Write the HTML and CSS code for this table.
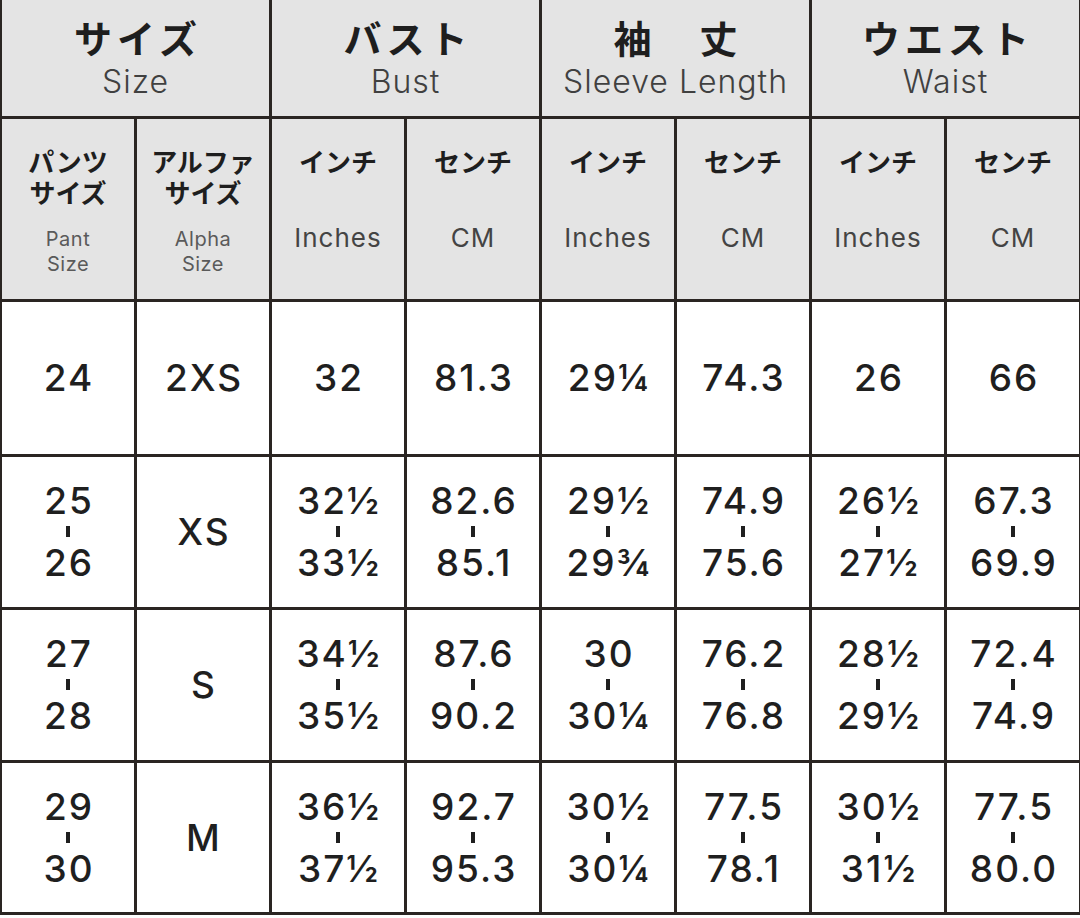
FILE: index.html
```html
<!DOCTYPE html>
<html lang="ja">
<head>
<meta charset="utf-8">
<title>サイズ表</title>
<link rel="stylesheet" href="styles.css">
</head>
<body>
<div class="chart">
  <div class="h1 span2"><div class="jp-big">サイズ</div><div class="en-big">Size</div></div>
  <div class="h1 span2"><div class="jp-big">バスト</div><div class="en-big">Bust</div></div>
  <div class="h1 span2"><div class="jp-big">袖　丈</div><div class="en-big">Sleeve Length</div></div>
  <div class="h1 span2"><div class="jp-big">ウエスト</div><div class="en-big">Waist</div></div>

  <div class="h2"><div class="jp-sm">パンツ<br>サイズ</div><div class="en-sm">Pant<br>Size</div></div>
  <div class="h2"><div class="jp-sm">アルファ<br>サイズ</div><div class="en-sm">Alpha<br>Size</div></div>
  <div class="h2"><div class="jp-sm">インチ</div><div class="en-md">Inches</div></div>
  <div class="h2"><div class="jp-sm">センチ</div><div class="en-md">CM</div></div>
  <div class="h2"><div class="jp-sm">インチ</div><div class="en-md">Inches</div></div>
  <div class="h2"><div class="jp-sm">センチ</div><div class="en-md">CM</div></div>
  <div class="h2"><div class="jp-sm">インチ</div><div class="en-md">Inches</div></div>
  <div class="h2"><div class="jp-sm">センチ</div><div class="en-md">CM</div></div>

  <div class="c"><span>24</span></div>
  <div class="c"><span>2XS</span></div>
  <div class="c"><span>32</span></div>
  <div class="c"><span>81.3</span></div>
  <div class="c"><span>29¼</span></div>
  <div class="c"><span>74.3</span></div>
  <div class="c"><span>26</span></div>
  <div class="c"><span>66</span></div>

  <div class="c"><span>25</span><i class="tick"></i><span>26</span></div>
  <div class="c"><span>XS</span></div>
  <div class="c"><span>32½</span><i class="tick"></i><span>33½</span></div>
  <div class="c"><span>82.6</span><i class="tick"></i><span>85.1</span></div>
  <div class="c"><span>29½</span><i class="tick"></i><span>29¾</span></div>
  <div class="c"><span>74.9</span><i class="tick"></i><span>75.6</span></div>
  <div class="c"><span>26½</span><i class="tick"></i><span>27½</span></div>
  <div class="c"><span>67.3</span><i class="tick"></i><span>69.9</span></div>

  <div class="c"><span>27</span><i class="tick"></i><span>28</span></div>
  <div class="c"><span>S</span></div>
  <div class="c"><span>34½</span><i class="tick"></i><span>35½</span></div>
  <div class="c"><span>87.6</span><i class="tick"></i><span>90.2</span></div>
  <div class="c"><span>30</span><i class="tick"></i><span>30¼</span></div>
  <div class="c"><span>76.2</span><i class="tick"></i><span>76.8</span></div>
  <div class="c"><span>28½</span><i class="tick"></i><span>29½</span></div>
  <div class="c"><span>72.4</span><i class="tick"></i><span>74.9</span></div>

  <div class="c"><span>29</span><i class="tick"></i><span>30</span></div>
  <div class="c"><span>M</span></div>
  <div class="c"><span>36½</span><i class="tick"></i><span>37½</span></div>
  <div class="c"><span>92.7</span><i class="tick"></i><span>95.3</span></div>
  <div class="c"><span>30½</span><i class="tick"></i><span>30¼</span></div>
  <div class="c"><span>77.5</span><i class="tick"></i><span>78.1</span></div>
  <div class="c"><span>30½</span><i class="tick"></i><span>31½</span></div>
  <div class="c"><span>77.5</span><i class="tick"></i><span>80.0</span></div>
</div>
</body>
</html>
```

FILE: styles.css
```css
html, body {
  margin: 0;
  padding: 0;
  background: #ffffff;
}

.chart {
  width: 1080px;
  box-sizing: border-box;
  padding: 0 1px 3px 2px;
  background: #2a2522;
  display: grid;
  grid-template-columns: repeat(8, 132px);
  grid-template-rows: 116px 180px 152px 150px 150px 149px;
  column-gap: 3px;
  row-gap: 3px;
  font-family: "Inter", "Liberation Sans", sans-serif;
  color: #222;
}

.span2 {
  grid-column: span 2;
}

.h1 {
  background: #e4e4e4;
  display: flex;
  flex-direction: column;
  align-items: center;
  padding-top: 16px;
  box-sizing: border-box;
}

.jp-big {
  font-family: "Noto Sans CJK JP", sans-serif;
  font-weight: 700;
  font-size: 38px;
  line-height: 42px;
  letter-spacing: 5px;
  margin-right: -5px;
  color: #1e1e1e;
}

.en-big {
  font-size: 32px;
  line-height: 36px;
  font-weight: 300;
  letter-spacing: 1px;
  color: #404040;
  margin-top: 6px;
  white-space: nowrap;
}

.h2 {
  background: #e4e4e4;
  display: flex;
  flex-direction: column;
  align-items: center;
  padding-top: 26px;
  box-sizing: border-box;
  text-align: center;
}

.jp-sm {
  font-family: "Noto Sans CJK JP", sans-serif;
  font-weight: 700;
  font-size: 26px;
  line-height: 31px;
  color: #1e1e1e;
}

.en-md {
  font-size: 26px;
  line-height: 30px;
  font-weight: 400;
  letter-spacing: 1px;
  color: #444;
  margin-top: 47px;
}

.en-sm {
  font-size: 20px;
  line-height: 25px;
  font-weight: 400;
  letter-spacing: 0.5px;
  color: #5a5a5a;
  margin-top: 20px;
}

.c {
  background: #ffffff;
  display: flex;
  flex-direction: column;
  align-items: center;
  justify-content: center;
  font-size: 37px;
  font-weight: 500;
  line-height: 36px;
  letter-spacing: 2px;
  color: #1f1f1f;
}

.c span {
  padding-left: 2px;
}

.tick {
  display: block;
  width: 4px;
  height: 11px;
  background: #1f1f1f;
  margin: 7px 0 8px;
}
```
